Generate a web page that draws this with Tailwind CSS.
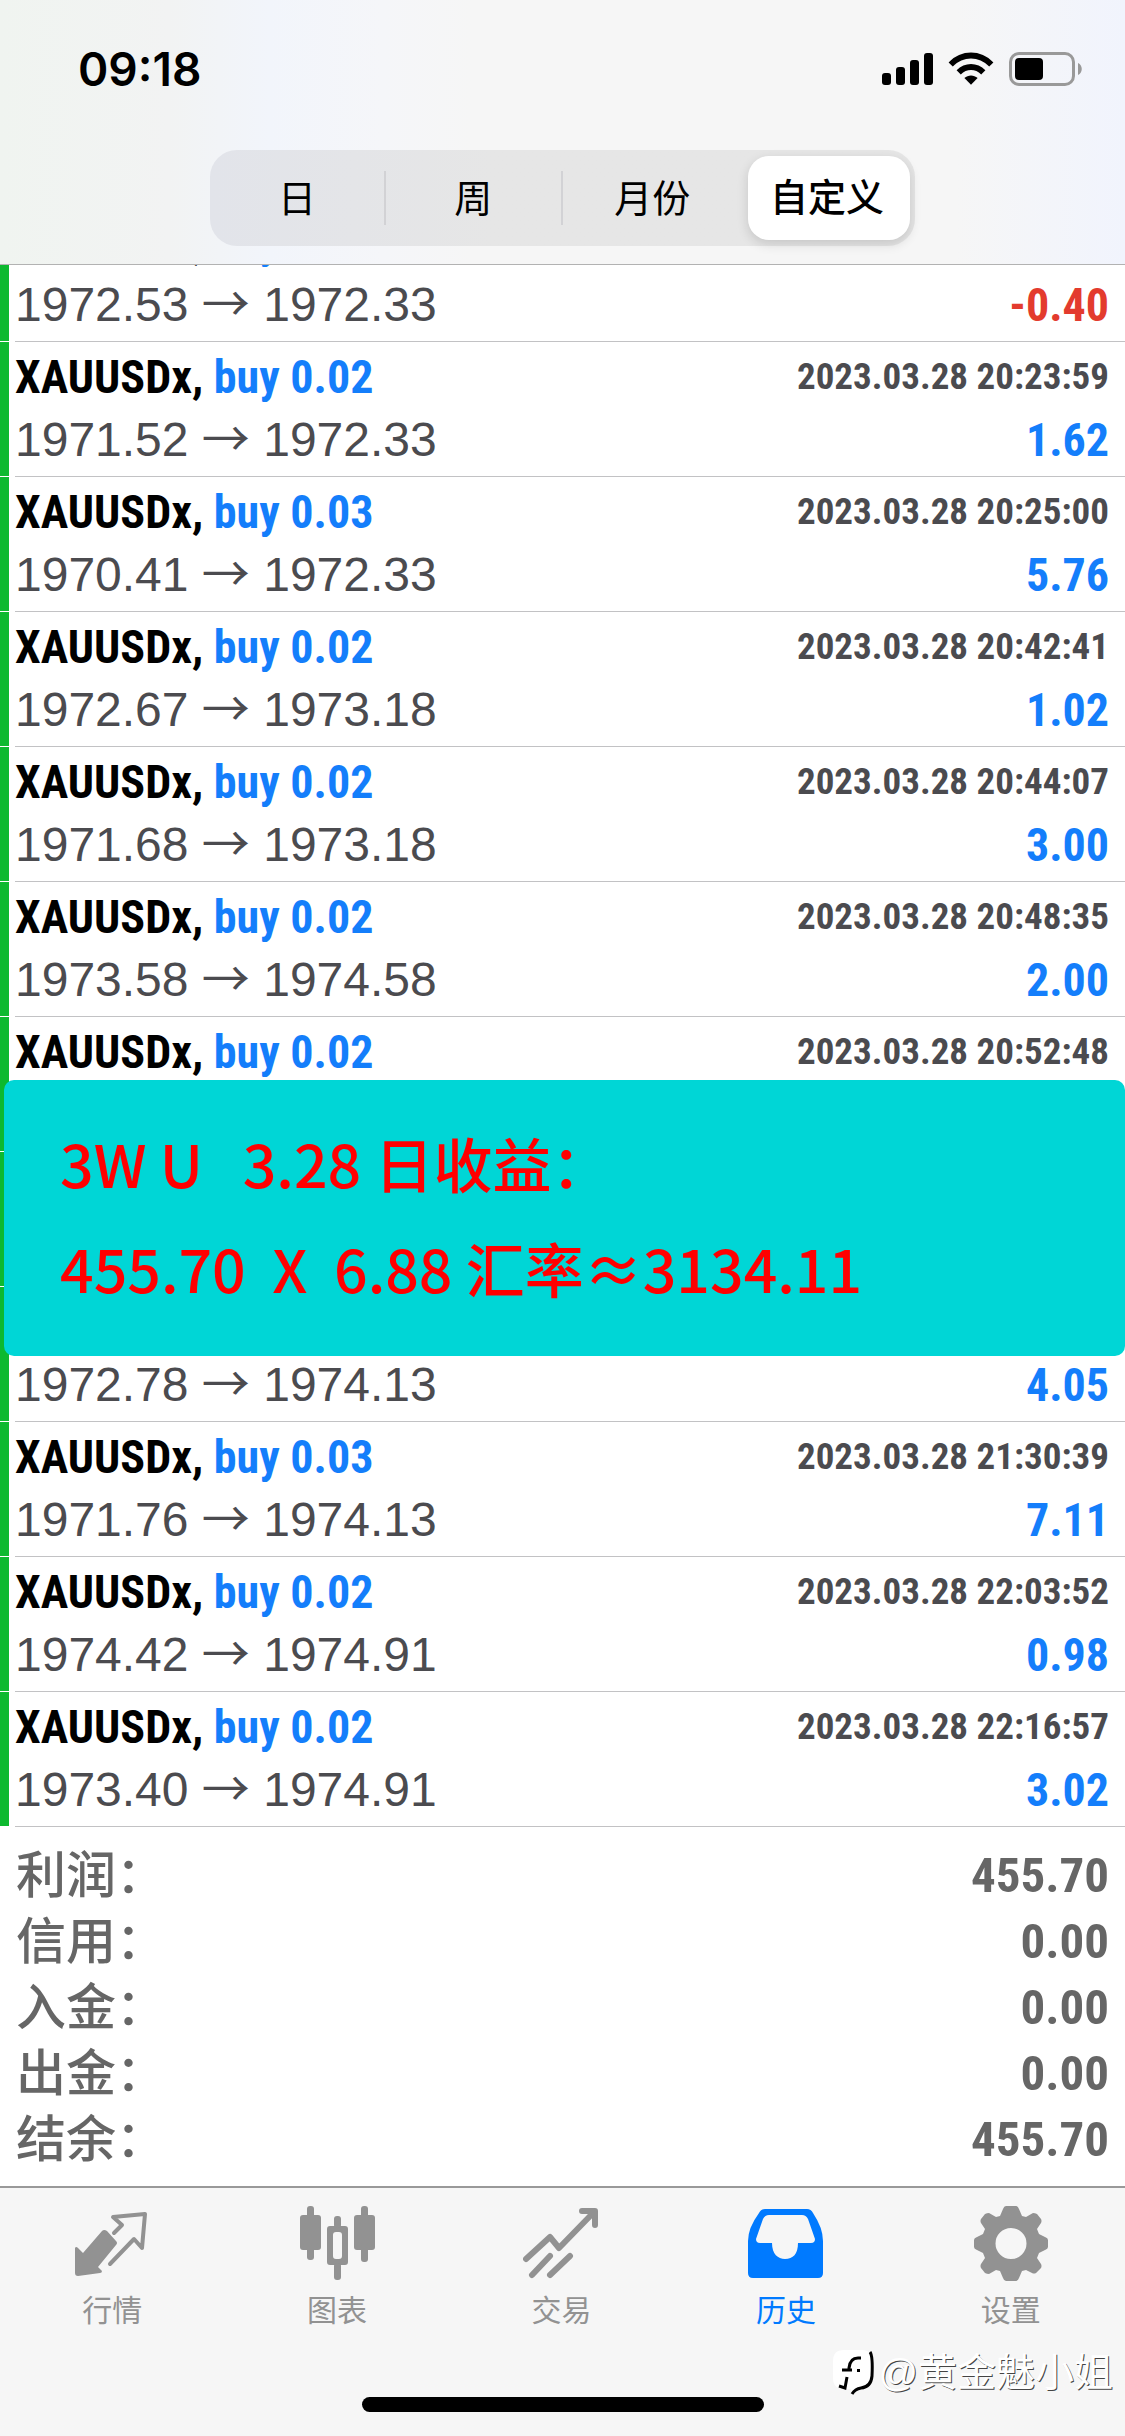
<!DOCTYPE html>
<html lang="zh-CN">
<head>
  <meta charset="UTF-8">
  <meta name="viewport" content="width=device-width, initial-scale=1.0">
  <title>历史</title>
  <script src="https://cdn.jsdelivr.net/npm/@tailwindcss/browser@4"></script>
</head>
<body class="min-h-screen bg-white font-['Liberation_Sans','Noto_Sans_CJK_SC',sans-serif]">
  <div class="flex min-h-screen flex-col">
    <header class="border-b border-[#b2b2b2] bg-[linear-gradient(90deg,#f0f4f0,#f2f3f3_15%,#f2f5fb_24%,#f5f6f9_34%,#f6f6f6_42%,#f6f6f6_85%,#f1f4fd)]">
      <div class="flex h-[138px] items-center justify-between pr-[43px] pl-[78px]">
        <span class="font-['Inter',sans-serif] text-[46px] font-semibold text-black">09:18</span>
        <div class="flex items-center gap-[15px]">
          <svg width="51" height="34" viewBox="0 0 51 34">
            <rect x="0" y="21" width="9" height="12" rx="3"/>
            <rect x="14" y="15" width="9" height="18" rx="3"/>
            <rect x="28" y="8" width="9" height="25" rx="3"/>
            <rect x="42" y="1" width="9" height="32" rx="3"/>
          </svg>
          <svg width="46" height="34" viewBox="0 0 46 34">
            <path d="M0.6 10.5C13 -2.8 33 -2.8 45.4 10.5L41.2 14.6C31 3.8 15 3.8 4.8 14.6Z"/>
            <path d="M8.6 18.2C16.6 10 29.4 10 37.4 18.2L33.2 22.4C27.4 16.6 18.6 16.6 12.8 22.4Z"/>
            <path d="M16.4 26C20.2 22.6 25.8 22.6 29.6 26L23 32.8Z"/>
          </svg>
          <svg width="73" height="34" viewBox="0 0 73 34">
            <rect x="1.5" y="1.5" width="63" height="31" rx="8.5" fill="none" stroke="#999" stroke-width="3"/>
            <rect x="6" y="6" width="28" height="22" rx="4"/>
            <path d="M69 11C74 13 74 21 69 23Z" fill="#999"/>
          </svg>
        </div>
      </div>
      <div class="flex justify-center px-[210px] pt-3 pb-[18px]">
        <div class="grid h-24 w-full grid-cols-[176fr_176fr_185fr_162fr] items-center rounded-[27px] bg-linear-to-r from-[#e2e4ea] to-[#e6e6e6] to-40% py-1.5 pr-[5px] text-[38px] text-black">
          <button type="button" class="h-[54px] border-r-2 border-[#d2d2d5]">日</button>
          <button type="button" class="h-[54px] border-r-2 border-[#d2d2d5]">周</button>
          <button type="button" class="h-[54px] pr-1.5">月份</button>
          <button type="button" class="h-full rounded-[21px] bg-white pr-1 font-medium shadow-[0_4px_12px_rgba(0,0,0,0.14)]">自定义</button>
        </div>
      </div>
    </header>

    <main class="relative flex-1">
      <div class="overflow-hidden">
        <ul id="deals" class="-mt-[58px]"></ul>
      </div>

      <dl class="px-4 pt-4 pb-3 text-[50px] leading-[66px] font-medium text-[#666]">
        <div class="flex justify-between"><dt>利润：</dt><dd class="font-['Roboto_Condensed',sans-serif] text-[49px] font-bold">455.70</dd></div>
        <div class="flex justify-between"><dt>信用：</dt><dd class="font-['Roboto_Condensed',sans-serif] text-[49px] font-bold">0.00</dd></div>
        <div class="flex justify-between"><dt>入金：</dt><dd class="font-['Roboto_Condensed',sans-serif] text-[49px] font-bold">0.00</dd></div>
        <div class="flex justify-between"><dt>出金：</dt><dd class="font-['Roboto_Condensed',sans-serif] text-[49px] font-bold">0.00</dd></div>
        <div class="flex justify-between"><dt>结余：</dt><dd class="font-['Roboto_Condensed',sans-serif] text-[49px] font-bold">455.70</dd></div>
      </dl>

      <!-- note laid over the list -->
      <div class="absolute top-[815px] right-0 left-1 h-[276px] rounded-[10px] bg-[#00d6d6] px-14 pt-[30px] font-['Noto_Sans_CJK_SC',sans-serif] text-[59px] leading-[105px] font-medium whitespace-pre text-[#f00]"><p>3W U   3.28 日收益：</p><p>455.70  X  6.88 汇率≈3134.11</p></div>
    </main>

    <footer class="relative h-[250px] border-t-2 border-[#999] bg-[#f6f6f6]">
      <nav class="grid grid-cols-5 pt-[17px] pr-0.5 text-[30px] leading-[44px] text-[#929292]">
        <a href="#" class="flex flex-col items-center gap-2">
          <svg width="76" height="76" viewBox="0 0 76 76">
            <path d="M28 26Q30 24 33 26L42 36Q44 38 42 40L24 62L28 66Q28 68 26 68L4 71Q1 71 1 68V43Q2 41 4 43L9 48Z" fill="#929292"/>
            <path d="M40 28L48 20L39 12L71 9L68 43L60 34L36 59" fill="none" stroke="#929292" stroke-width="4" stroke-linejoin="round" stroke-linecap="round"/>
          </svg>
          行情
        </a>
        <a href="#" class="flex flex-col items-center gap-2">
          <svg width="76" height="76" viewBox="0 0 76 76" fill="#929292">
            <rect x="1" y="10" width="21" height="35" rx="3"/>
            <rect x="8" y="1" width="7" height="54" rx="3"/>
            <rect x="55" y="10" width="21" height="35" rx="3"/>
            <rect x="62" y="1" width="7" height="56" rx="3"/>
            <path fill-rule="evenodd" d="M31 21H46Q49 21 49 24V57Q49 60 46 60H31Q28 60 28 57V24Q28 21 31 21ZM37 27Q34 27 34 30V51Q34 54 37 54H40Q43 54 43 51V30Q43 27 40 27Z"/>
            <rect x="35" y="11" width="7" height="12" rx="3"/>
            <rect x="35" y="58" width="7" height="17" rx="3"/>
          </svg>
          图表
        </a>
        <a href="#" class="flex flex-col items-center gap-2">
          <svg width="76" height="76" viewBox="0 0 76 76" fill="none" stroke="#929292" stroke-width="6" stroke-linecap="round" stroke-linejoin="round">
            <path d="M3 54L27 32L36 43L71 7M59 6H72V20M9 70L27 51M27 70L47 51"/>
          </svg>
          交易
        </a>
        <a href="#" class="flex flex-col items-center gap-2 text-[#007aff]">
          <svg width="76" height="76" viewBox="0 0 76 76">
            <path fill="#007aff" fill-rule="evenodd" d="M17 4H59Q63 4 65 8Q75 23 75 36V68Q75 73 70 73H5Q0 73 0 68V36Q0 23 11 8Q13 4 17 4ZM21 10Q17 10 15 14L8 34Q8 38 12 38H24C24 49 30 54 37 54C45 54 50 49 50 38H63Q67 38 67 34L60 14Q58 10 54 10Z"/>
          </svg>
          历史
        </a>
        <a href="#" class="flex flex-col items-center gap-2">
          <svg width="76" height="76" viewBox="0 0 76 76" fill="#929292">
            <path fill-rule="evenodd" d="M33 1H43Q45 1 46 4L49 11L53 12L60 8Q62 8 64 9L68 14Q69 16 68 18L64 24L66 29L72 32Q75 33 75 35V42Q75 44 72 45L66 48L64 53L68 59Q69 61 68 63L63 68Q61 69 59 68L53 65L49 66L46 73Q45 76 43 76H33Q31 76 30 73L27 66L23 65L16 69Q14 69 12 68L8 63Q7 61 8 59L12 53L10 48L4 45Q1 44 1 42V35Q1 33 4 32L10 29L12 24L8 18Q7 16 8 14L12 9Q14 8 16 8L23 12L27 11L30 4Q31 1 33 1ZM38 23A15.500 15.500 0 1 0 38 54A15.500 15.500 0 1 0 38 23Z"/>
          </svg>
          设置
        </a>
      </nav>
      <div class="mx-auto mt-[64px] h-[15px] w-[402px] rounded-full bg-black"></div>
      <div class="absolute right-3 bottom-10 flex items-center gap-0.5">
        <svg width="43" height="46" viewBox="0 0 43 46">
          <path d="M11 0H29Q39 0 39 11V28Q39 39 28 39L19 44L18 39H11Q0 39 0 28V11Q0 0 11 0Z" fill="#fff"/>
          <path d="M28 8H25Q17 8 16 18V20H9M14 27L12 38L6 36M16 20H19" fill="none" stroke="#000" stroke-width="3"/>
          <rect x="24" y="19" width="3" height="3"/>
          <path d="M37 2Q40 6 39 26Q38 37 28 38Q22 39 19 44" fill="none" stroke="#000" stroke-width="3"/>
        </svg>
        <span class="text-[39px] leading-[46px] text-white [text-shadow:1px_1px_0_#444]">@黄金魅小姐</span>
      </div>
    </footer>
  </div>

  <script>
    const deals = [
      ['0.02', '2023.03.28 20:20:41', '1972.53', '1972.33', '-0.40'],
      ['0.02', '2023.03.28 20:23:59', '1971.52', '1972.33', '1.62'],
      ['0.03', '2023.03.28 20:25:00', '1970.41', '1972.33', '5.76'],
      ['0.02', '2023.03.28 20:42:41', '1972.67', '1973.18', '1.02'],
      ['0.02', '2023.03.28 20:44:07', '1971.68', '1973.18', '3.00'],
      ['0.02', '2023.03.28 20:48:35', '1973.58', '1974.58', '2.00'],
      ['0.02', '2023.03.28 20:52:48', '', '', ''],
      ['', '', '', '', ''],
      ['', '', '1972.78', '1974.13', '4.05'],
      ['0.03', '2023.03.28 21:30:39', '1971.76', '1974.13', '7.11'],
      ['0.02', '2023.03.28 22:03:52', '1974.42', '1974.91', '0.98'],
      ['0.02', '2023.03.28 22:16:57', '1973.40', '1974.91', '3.02'],
    ]

    document.getElementById('deals').innerHTML = deals.map(([lot, time, open, close, profit]) => `
      <li class="flex h-[135px]">
        <div class="mr-1.5 w-[9px] border-b border-white bg-[#0db92f]"></div>
        <div class="flex-1 border-b border-[#c2c2c4] pt-1 pr-4">
          <div class="flex h-[62px] items-center justify-between font-['Roboto_Condensed',sans-serif] font-bold">
            <p class="text-[46px] text-black">${lot && `XAUUSDx, <span class="text-[#147efb]">buy ${lot}</span>`}</p>
            <time class="text-[37px] text-[#4b4b4f]">${time}</time>
          </div>
          <div class="flex h-16 items-center justify-between text-[48px]">
            <p class="text-[#4b4b4f]">${open && `${open} <span class="font-['Noto_Sans_CJK_SC'] leading-[0]">→</span> ${close}`}</p>
            <p class="font-['Roboto_Condensed',sans-serif] text-[46px] font-bold ${profit < 0 ? 'text-[#e33b2e]' : 'text-[#147efb]'}">${profit}</p>
          </div>
        </div>
      </li>`).join('')
  </script>
</body>
</html>
